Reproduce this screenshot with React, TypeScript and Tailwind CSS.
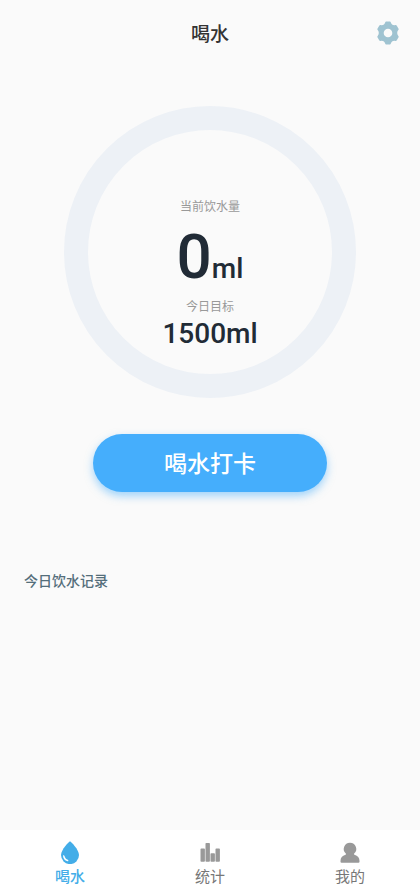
import { useState } from 'react'

const tabs = [
  { key: 'drink', label: '喝水', icon: DropIcon },
  { key: 'stats', label: '统计', icon: BarsIcon },
  { key: 'mine', label: '我的', icon: UserIcon },
]

function GearIcon() {
  return (
    <svg viewBox="0 0 24 24" className="h-6 w-6" aria-hidden="true">
      <path
        fill="#9fc3d1"
        stroke="#9fc3d1"
        strokeWidth="2"
        strokeLinejoin="round"
        d="M10.200 1.500H13.800Q15 5.900 19.800 5L21.700 8.200Q18.600 12 21.700 15.800L19.800 19Q15 18.100 13.800 22.500H10.200Q9 18.100 4.200 19L2.300 15.800Q5.400 12 2.300 8.200L4.200 5Q9 5.900 10.200 1.500z"
      />
      <circle cx="12" cy="12" r="4.300" fill="#fafafa" />
    </svg>
  )
}

function DropIcon() {
  return (
    <svg viewBox="0 0 20 24" className="h-6 w-5" aria-hidden="true">
      <path fill="currentColor" d="M10 1.300C10.800 1.300 19 9.800 19 15.100a9 9 0 0 1-18 0C1 9.800 9.200 1.300 10 1.300z" />
      <path fill="#fff" d="M3 15.600c.5-.7 1.300-.5 1.500.3.500 2 1.700 3.100 3.300 3.800.9.500.8 1.700-.3 1.600C4.700 20.900 3 18.500 3 15.600z" />
    </svg>
  )
}

function BarsIcon() {
  return (
    <svg viewBox="0 0 20 24" className="h-6 w-5" fill="currentColor" aria-hidden="true">
      <rect x="0.5" y="8.6" width="4.400" height="13.200" rx="0.8" />
      <rect x="5.500" y="3" width="4.400" height="18.800" rx="0.8" />
      <rect x="10.500" y="13.200" width="4.400" height="8.600" rx="0.8" />
      <rect x="15.500" y="8.600" width="4.400" height="13.200" rx="0.8" />
    </svg>
  )
}

function UserIcon() {
  return (
    <svg viewBox="0 0 20 24" className="h-6 w-5" fill="currentColor" aria-hidden="true">
      <path d="M10 2.800a6.200 6.200 0 0 1 4.200 10.800c-.4.400-.2.900.3 1.100 3.300 1.100 5 3.100 5 6.200v.900a1 1 0 0 1-1 1h-17a1 1 0 0 1-1-1v-.9c0-3.100 1.700-5.100 5-6.200.5-.2.700-.7.3-1.100A6.200 6.200 0 0 1 10 2.800z" />
    </svg>
  )
}

export default function App() {
  const [active, setActive] = useState('drink')

  return (
    <div className="flex min-h-screen flex-col bg-[#fafafa] font-['Noto_Sans_CJK_SC',sans-serif]">
      <header className="grid h-16.5 grid-cols-[1fr_auto_1fr] items-center px-5">
        <h1 className="col-start-2 text-[19px] font-medium text-[#333]">喝水</h1>
        <button type="button" aria-label="设置" className="justify-self-end">
          <GearIcon />
        </button>
      </header>

      <main className="flex flex-1 flex-col">
        {/* 进度圆环 */}
        <section className="mt-10 flex aspect-square w-73 flex-col items-center self-center rounded-full border-24 border-[#edf1f6] pt-16">
          <p className="text-xs leading-6 text-[#999]">当前饮水量</p>
          <p className="mt-2 flex items-baseline font-[Roboto,sans-serif] font-medium text-[#212b36]">
            <span className="text-[62px] leading-none">0</span>
            <span className="text-[28px] leading-none">ml</span>
          </p>
          <p className="mt-1.5 text-xs leading-6 text-[#999]">今日目标</p>
          <p className="font-[Roboto,sans-serif] text-[28px] leading-8 font-medium text-[#212b36]">1500ml</p>
        </section>

        <button
          type="button"
          className="mt-9 h-14.5 w-58.5 self-center rounded-full bg-[#45aefc] pb-0.5 text-[23px] font-medium text-white shadow-[0_4px_8px_#45aefc80]"
        >
          喝水打卡
        </button>

        <h2 className="mt-19.5 px-6 text-sm font-medium text-[#546e7a]">今日饮水记录</h2>
      </main>

      <nav className="grid grid-cols-3 bg-white pt-2.5">
        {tabs.map(({ key, label, icon: Icon }) => (
          <button
            key={key}
            type="button"
            onClick={() => setActive(key)}
            className={`flex flex-col items-center ${active === key ? 'text-[#43ade8]' : 'text-[#999]'}`}
          >
            <Icon />
            <span className={`text-[15px] leading-6 ${active === key ? 'font-medium' : 'text-[#777]'}`}>{label}</span>
          </button>
        ))}
      </nav>
    </div>
  )
}
